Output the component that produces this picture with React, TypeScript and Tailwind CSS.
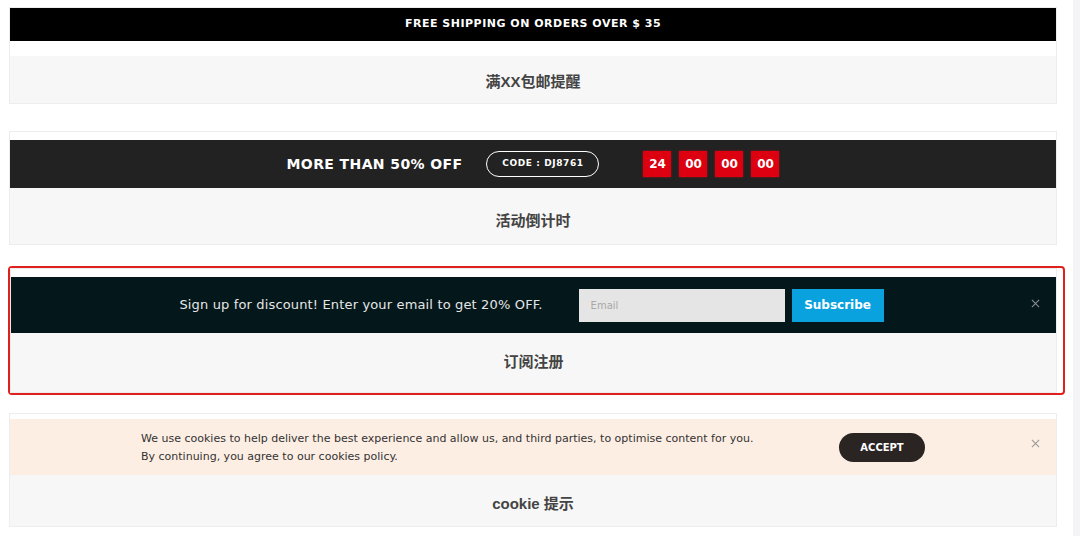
import React from 'react';

const sans = { fontFamily: '"DejaVu Sans", "Noto Sans CJK SC", sans-serif' };

function Close({ className = '' }: { className?: string }) {
  return (
    <svg viewBox="0 0 10 10" className={`w-[9px] h-[9px] ${className}`} fill="none" stroke="currentColor" strokeWidth="1.2">
      <path d="M1 1 L9 9 M9 1 L1 9" />
    </svg>
  );
}

function Label({ children, offset = 'pt-[6px]' }: { children: React.ReactNode; offset?: string }) {
  return (
    <div className={`flex items-center justify-center bg-[#f7f7f7] text-[15px] font-bold text-[#444] font-['Liberation_Sans','Noto_Sans_CJK_SC',sans-serif] h-full ${offset}`}>
      {children}
    </div>
  );
}

const TIMER = ['24', '00', '00', '00'];

export default function App() {
  return (
    <div className="flex w-[1080px] h-[536px] bg-white overflow-hidden" style={sans}>
      <main className="w-[1073px] pl-[9px] pr-[16px] pt-[7px]">
        {/* Free shipping */}
        <section className="border border-[#ededed] w-[1048px]">
          <div className="h-[33px] bg-black flex items-center justify-center text-white text-[11px] font-bold tracking-[0.5px]">
            FREE SHIPPING ON ORDERS OVER $ 35
          </div>
          <div className="h-[15px] bg-white" />
          <div className="h-[47px]">
            <Label>满XX包邮提醒</Label>
          </div>
        </section>

        {/* Countdown */}
        <section className="mt-[27px] border border-[#ededed] w-[1048px] pt-[8px]">
          <div className="h-[48px] bg-[#222] flex items-center justify-center">
            <span className="text-white text-[14px] font-bold tracking-[0.4px]">MORE THAN 50% OFF</span>
            <span className="ml-[24px] w-[113px] h-[26px] rounded-full border-[1.5px] border-white flex items-center justify-center text-white text-[9px] font-bold tracking-[0.6px]">
              CODE : DJ8761
            </span>
            <div className="ml-[44px] flex gap-[8px]">
              {TIMER.map((t, i) => (
                <span
                  key={i}
                  className="w-[28px] h-[26px] bg-[#dc0010] flex items-center justify-center text-white text-[12px] font-bold shadow-[0_0_2px_rgba(255,0,0,0.6)]"
                >
                  {t}
                </span>
              ))}
            </div>
          </div>
          <div className="h-[56px]">
            <Label offset="pt-[10px]">活动倒计时</Label>
          </div>
        </section>

        {/* Subscribe (highlighted) */}
        <div className="mt-[21px] -ml-[1px] w-[1057px] border-2 border-[#e0201e] rounded-[4px] pr-[6px]">
          <section className="border border-[#ededed] pt-[8px] w-[1047px]">
            <div className="relative h-[56px] bg-[#04171b] flex items-center justify-center pr-[4px]">
              <span className="text-[#e6e6e6] text-[13px] tracking-[0.15px]">Sign up for discount! Enter your email to get 20% OFF.</span>
              <div className="ml-[36px] w-[206px] h-[33px] bg-[#e5e5e5] flex items-center pl-[12px] text-[10px] text-[#a8a8a8]">
                Email
              </div>
              <button className="ml-[7px] w-[92px] h-[33px] bg-[#0aa1df] text-white text-[12px] font-bold">
                Subscribe
              </button>
              <Close className="absolute right-[16px] top-[22px] text-[#8a8f90]" />
            </div>
            <div className="h-[59px]">
              <Label offset="pt-[0px]">订阅注册</Label>
            </div>
          </section>
        </div>

        {/* Cookie */}
        <section className="mt-[18px] border border-[#ededed] w-[1048px] pt-[5px]">
          <div className="relative h-[56px] bg-[#fdeee3] flex items-center justify-center">
            <div className="w-[698px] text-[11px] leading-[18px] text-[#333] pt-[2px]">
              <p>We use cookies to help deliver the best experience and allow us, and third parties, to optimise content for you.</p>
              <p>By continuing, you agree to our cookies policy.</p>
            </div>
            <button className="w-[86px] h-[29px] rounded-full bg-[#2a2522] text-white text-[10px] font-bold">ACCEPT</button>
            <Close className="absolute right-[16px] top-[20px] text-[#999]" />
          </div>
          <div className="h-[51px]">
            <Label offset="pt-[8px]">cookie 提示</Label>
          </div>
        </section>
      </main>
      <aside className="w-[7px] bg-[#f4f4f8]" />
    </div>
  );
}
